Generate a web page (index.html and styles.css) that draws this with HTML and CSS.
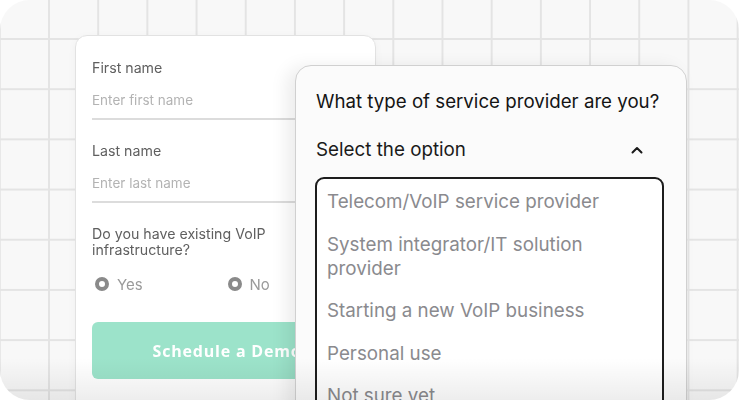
FILE: index.html
```html
<!DOCTYPE html>
<html lang="en">
<head>
    <meta charset="UTF-8">
    <meta name="viewport" content="width=device-width, initial-scale=1.0">
    <title>Schedule a Demo</title>
    <link rel="stylesheet" href="styles.css">
</head>
<body>

    <!-- Grid backdrop -->
    <div class="frame">

        <!-- Contact form (behind) -->
        <div class="form-card">
            <div class="field">
                <label class="field-label">First name</label>
                <div class="field-input">Enter first name</div>
            </div>
            <div class="field">
                <label class="field-label">Last name</label>
                <div class="field-input">Enter last name</div>
            </div>
            <p class="question">Do you have existing VoIP<br>infrastructure?</p>
            <div class="radios">
                <div class="radio"><span class="radio-dot"></span>Yes</div>
                <div class="radio"><span class="radio-dot"></span>No</div>
            </div>
            <button class="demo-btn">Schedule a Demo</button>
        </div>

        <!-- Provider dropdown (on top) -->
        <div class="select-card">
            <h2 class="select-title">What type of service provider are you?</h2>
            <div class="select-head">
                <span>Select the option</span>
                <svg class="chevron" width="12" height="8" viewBox="0 0 12 8">
                    <path d="M1.5 6.5 L6 2 L10.5 6.5" fill="none" stroke="#1a1a1a" stroke-width="2" stroke-linecap="round" stroke-linejoin="round"/>
                </svg>
            </div>
            <ul class="options">
                <li>Telecom/VoIP service provider</li>
                <li>System integrator/IT solution provider</li>
                <li>Starting a new VoIP business</li>
                <li>Personal use</li>
                <li>Not sure yet</li>
            </ul>
        </div>

    </div>

</body>
</html>
```

FILE: styles.css
```css
/* Base */
body {
    margin: 0;
    background-color: #ffffff;
    font-family: "Inter", "Open Sans", sans-serif;
}

/* Rounded frame with grid lines */
.frame {
    position: relative;
    width: 739px;
    height: 400px;
    border-radius: 30px;
    overflow: hidden;
    background-color: #f8f8f8;
    background-image:
        linear-gradient(to right, #e4e4e4 2px, transparent 2px),
        linear-gradient(to bottom, #e4e4e4 2px, transparent 2px);
    background-size: 49.2px 50.2px;
    background-position: 48px 38px;
    box-sizing: border-box;
    padding: 35px 0 0 75px;
}

/* soft shade along the bottom edge */
.frame::after {
    content: "";
    position: absolute;
    left: 0;
    right: 0;
    bottom: 0;
    height: 42px;
    background: linear-gradient(to bottom, rgba(0, 0, 0, 0), rgba(0, 0, 0, 0.07));
    pointer-events: none;
}

/* Form card */
.form-card {
    width: 301px;
    height: 420px;
    box-sizing: border-box;
    padding: 24px 15px 0 16px;
    background-color: #ffffff;
    border: 1.5px solid #e2e2e2;
    border-radius: 12px;
    box-shadow: 0 2px 8px rgba(0, 0, 0, 0.04);
    filter: blur(0.35px);
}

.field + .field {
    margin-top: 23px;
}

.field-label {
    display: block;
    font-size: 14.2px;
    line-height: 16px;
    color: #5f5f5f;
}

.field-input {
    padding: 16px 0 10px;
    font-size: 13.5px;
    line-height: 16px;
    color: #b3b3b3;
    border-bottom: 2px solid #dcdcdc;
}

.question {
    margin: 23px 0 0;
    font-size: 14.2px;
    line-height: 16px;
    color: #5f5f5f;
}

.radios {
    display: flex;
    margin-top: 17px;
    padding-left: 3px;
}

.radio {
    display: flex;
    align-items: center;
    width: 135px;
    height: 18px;
    font-size: 15px;
    color: #9a9a9a;
}

.radio-dot {
    width: 6px;
    height: 6px;
    margin-right: 8px;
    border: 4px solid #8a8a8a;
    border-radius: 50%;
}

.demo-btn {
    display: block;
    width: 270px;
    height: 57px;
    margin-top: 29px;
    border: none;
    border-radius: 6px;
    background-color: #9ce3ca;
    color: #ffffff;
    font-family: "Open Sans", sans-serif;
    font-size: 16px;
    font-weight: 700;
    letter-spacing: 0.8px;
}

/* Dropdown card */
.select-card {
    position: absolute;
    top: 65px;
    left: 295px;
    width: 392px;
    height: 360px;
    box-sizing: border-box;
    padding: 25px 22px 0 19px;
    background-color: #fbfbfb;
    border: 1.5px solid #d0d0d0;
    border-radius: 16px;
    box-shadow: -8px 2px 18px rgba(0, 0, 0, 0.08);
}

.select-title {
    margin: 0 0 0 1px;
    font-size: 18.7px;
    font-weight: 400;
    line-height: 22px;
    color: #141414;
}

.select-head {
    display: flex;
    justify-content: space-between;
    align-items: center;
    margin: 26px 0 0 1px;
    padding-right: 21px;
    font-size: 18.8px;
    line-height: 22px;
    color: #1a1a1a;
}

.chevron {
    display: block;
}

.options {
    list-style: none;
    margin: 16px 0 0;
    padding: 11px 20px 0 10px;
    height: 300px;
    background-color: #ffffff;
    border: 2px solid #1d1d1d;
    border-radius: 9px;
}

.options li {
    font-size: 18.8px;
    line-height: 24px;
    color: #8a8a8e;
}

.options li + li {
    margin-top: 18.5px;
}
```
